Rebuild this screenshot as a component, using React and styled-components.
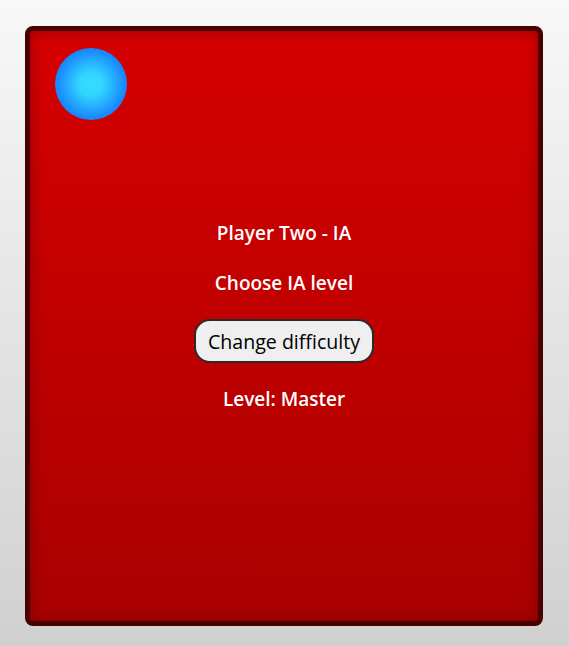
import React from "react";
import styled, { createGlobalStyle } from "styled-components";

const Global = createGlobalStyle`
  html, body { margin: 0; padding: 0; }
  body {
    font-family: "Open Sans", "DejaVu Sans", sans-serif;
    background: linear-gradient(to bottom, #f8f8f8 0%, #d0d0d0 100%);
    min-height: 646px;
  }
`;

const Page = styled.div`
  width: 569px;
  height: 646px;
  padding: 26px 0 0 25px;
  box-sizing: border-box;
`;

const Card = styled.div`
  width: 518px;
  height: 600px;
  box-sizing: border-box;
  border: 5px solid #480000;
  border-radius: 8px;
  background: linear-gradient(to bottom, #d60000 0%, #aa0000 100%);
  box-shadow: inset 0 0 14px rgba(90, 0, 0, 0.5);
  display: flex;
  flex-direction: column;
  padding: 17px 0 0 25px;
`;

const Token = styled.div`
  width: 72px;
  height: 72px;
  border-radius: 50%;
  background: radial-gradient(circle at 50% 50%, #35dcff 0%, #32d6ff 22%, #1a8cff 65%, #0a5cff 100%);
  flex-shrink: 0;
`;

const Content = styled.div`
  margin: 102px 25px 0 0;
  display: flex;
  flex-direction: column;
  align-items: center;
`;

const Line = styled.div`
  color: #ffffff;
  font-size: 19px;
  font-weight: 600;
  line-height: 22px;
  margin-top: ${(p) => p.$gap || 0}px;
`;

const Button = styled.button`
  margin-top: 25px;
  height: 44px;
  padding: 0 12px;
  border: 2px solid #2a2a2a;
  border-radius: 16px;
  background: #efefef;
  color: #000;
  font-family: "Open Sans", "DejaVu Sans", sans-serif;
  font-size: 19.6px;
  cursor: pointer;
`;

export default function App() {
  return (
    <>
      <Global />
      <Page>
        <Card>
          <Token />
          <Content>
            <Line>Player Two - IA</Line>
            <Line $gap={28}>Choose IA level</Line>
            <Button>Change difficulty</Button>
            <Line $gap={25}>Level: Master</Line>
          </Content>
        </Card>
      </Page>
    </>
  );
}
